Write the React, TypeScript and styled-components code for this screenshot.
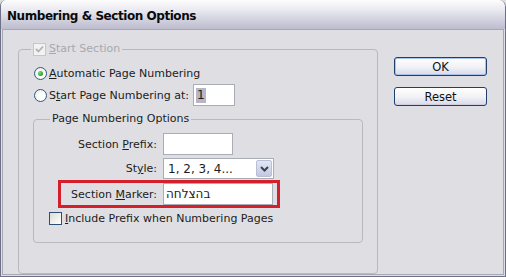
import React from 'react'
import styled, { createGlobalStyle } from 'styled-components'

const GlobalStyle = createGlobalStyle`
  html, body {
    margin: 0;
    padding: 0;
    background: #dfdfe3;
  }
  body {
    font-family: "DejaVu Sans", "Liberation Sans", sans-serif;
    font-size: 11px;
    color: #1c1c1c;
  }
`

const Window = styled.div`
  width: 506px;
  height: 277px;
  box-sizing: border-box;
  display: flex;
  flex-direction: column;
  background: #dfdfe3;
  border: 1px solid #6f6f88;
  border-top: none;
  border-radius: 6px 7px 0 0;
  overflow: hidden;
`

const TitleBar = styled.div`
  height: 29px;
  flex: none;
  display: flex;
  align-items: center;
  padding: 2px 0 0 6px;
  box-sizing: border-box;
  background: linear-gradient(#fdfdfe 0%, #e9e9f0 35%, #c9c9d8 80%, #bdbdcf 100%);
  font-weight: bold;
  font-size: 12px;
  letter-spacing: -0.45px;
  color: #0a0a0a;
`

const Body = styled.div`
  flex: 1;
  display: flex;
  margin: 0 1px 1px 1px;
  padding: 12px 0 0 15px;
  gap: 16px;
  border: 1px solid #a8a8b4;
`

const Group = styled.fieldset`
  margin: 0;
  padding: 0 14px 13px 14px;
  width: 360px;
  box-sizing: border-box;
  border: 1px solid #b9b9bd;
  border-radius: 4px;
`

const InnerGroup = styled.fieldset`
  margin: 6px 0 0 0;
  padding: 0 0 17px 0;
  width: 330px;
  box-sizing: border-box;
  border: 1px solid #b9b9bd;
  border-radius: 4px;
`

const Legend = styled.legend<{ $offset: number }>`
  margin-left: ${({ $offset }) => $offset}px;
  padding: 0 2px;
  line-height: 14px;
  display: flex;
  align-items: center;
  gap: 3px;
`

const Label = styled.span<{ $disabled?: boolean }>`
  color: ${({ $disabled }) => ($disabled ? '#a8a8ad' : '#1c1c1c')};
  white-space: nowrap;
`

const Key = styled.span`
  text-decoration: underline;
  text-underline-offset: 1px;
`

const RadioRow = styled.div<{ $top?: number }>`
  height: 22px;
  display: flex;
  align-items: center;
  margin-top: ${({ $top }) => $top ?? 0}px;
  padding-left: 1px;
  gap: 2px;
`

const Radio = styled.span<{ $checked?: boolean }>`
  width: 13px;
  height: 13px;
  box-sizing: border-box;
  border-radius: 50%;
  border: 1px solid #2c5a88;
  background: radial-gradient(circle at 60% 60%, #ffffff 30%, #e2e2dc 100%);
  display: flex;
  align-items: center;
  justify-content: center;
  flex: none;

  &::after {
    content: '';
    display: ${({ $checked }) => ($checked ? 'block' : 'none')};
    width: 5px;
    height: 5px;
    border-radius: 50%;
    background: radial-gradient(circle at 35% 35%, #7fdc7f 0%, #21a121 70%);
  }
`

const Box = styled.span<{ $disabled?: boolean }>`
  width: 13px;
  height: 13px;
  box-sizing: border-box;
  flex: none;
  border: 1px solid ${({ $disabled }) => ($disabled ? '#c6c6c6' : '#2c4f74')};
  background: ${({ $disabled }) =>
    $disabled ? '#f2f2f2' : 'linear-gradient(135deg, #dcdcd6, #ffffff)'};
  display: flex;
  align-items: center;
  justify-content: center;
`

const Field = styled.div<{ $width: number; $height?: number }>`
  width: ${({ $width }) => $width}px;
  height: ${({ $height }) => $height ?? 22}px;
  box-sizing: border-box;
  flex: none;
  background: #ffffff;
  border: 1px solid #a9adb6;
  display: flex;
  align-items: center;
  padding-left: 2px;
  font-size: 12px;
`

const Selected = styled.span`
  background: #b6b6c6;
  padding: 0 1px;
  line-height: 15px;
`

const FormRow = styled.div<{ $top: number }>`
  display: flex;
  align-items: center;
  margin-top: ${({ $top }) => $top}px;
  gap: 6px;
`

const RowLabel = styled.span<{ $width: number }>`
  width: ${({ $width }) => $width}px;
  text-align: right;
  white-space: nowrap;
`

const MarkerFrame = styled.div`
  margin: 1px 0 0 24px;
  width: 222px;
  height: 28px;
  box-sizing: border-box;
  border: 3px solid #d4202c;
  display: flex;
  align-items: center;
  gap: 6px;
`

const Select = styled.div`
  width: 111px;
  height: 21px;
  box-sizing: border-box;
  background: #ffffff;
  border: 1px solid #a9adb6;
  display: flex;
  align-items: stretch;
  font-size: 12px;
`

const SelectText = styled.span`
  flex: 1;
  display: flex;
  align-items: center;
  padding-left: 4px;
`

const SelectButton = styled.span`
  width: 16px;
  margin: 1px;
  box-sizing: border-box;
  border: 1px solid #b9bfd8;
  border-radius: 2px;
  background: linear-gradient(#e2e6f4, #c3c8e0);
  display: flex;
  align-items: center;
  justify-content: center;
`

const CheckRow = styled.div`
  display: flex;
  align-items: center;
  gap: 3px;
  margin: 4px 0 0 15px;
  height: 13px;
`

const Buttons = styled.div`
  display: flex;
  flex-direction: column;
  gap: 11px;
  padding-top: 15px;
`

const Button = styled.div<{ $default?: boolean }>`
  width: 93px;
  height: 19px;
  box-sizing: border-box;
  border: 1px solid #1f3f6e;
  border-radius: 3px;
  background: linear-gradient(#ffffff 0%, #f2f2f7 50%, #d9d9e8 100%);
  box-shadow: ${({ $default }) =>
    $default ? 'inset 0 0 0 1px #a8c4ee' : 'inset 0 -1px 0 #cfcfe0'};
  display: flex;
  align-items: center;
  justify-content: center;
  font-size: 11.5px;
  color: #111;
`

const Check = ({ color }: { color: string }) => (
  <svg width="9" height="9" viewBox="0 0 9 9">
    <path d="M1 4 L3.5 6.5 L8 1.5" fill="none" stroke={color} strokeWidth="1.8" />
  </svg>
)

const Chevron = () => (
  <svg width="9" height="6" viewBox="0 0 9 6">
    <path d="M1 1 L4.5 4.5 L8 1" fill="none" stroke="#3c4154" strokeWidth="2" />
  </svg>
)

export default function App() {
  return (
    <>
      <GlobalStyle />
      <Window>
        <TitleBar>Numbering &amp; Section Options</TitleBar>
        <Body>
          <Group>
            <Legend $offset={-2}>
              <Box $disabled>
                <Check color="#b2b2b2" />
              </Box>
              <Label $disabled>
                <Key>S</Key>tart Section
              </Label>
            </Legend>

            <RadioRow $top={6}>
              <Radio $checked />
              <Label>
                <Key>A</Key>utomatic Page Numbering
              </Label>
            </RadioRow>
            <RadioRow>
              <Radio />
              <Label>
                S<Key>t</Key>art Page Numbering at:
              </Label>
              <Field $width={42} style={{ marginLeft: 2 }}>
                <Selected>1</Selected>
              </Field>
            </RadioRow>

            <InnerGroup>
              <Legend $offset={16}>
                <Label>Page Numbering Options</Label>
              </Legend>

              <FormRow $top={7}>
                <RowLabel $width={123}>
                  Section <Key>P</Key>refix:
                </RowLabel>
                <Field $width={70} />
              </FormRow>
              <FormRow $top={3}>
                <RowLabel $width={123}>
                  St<Key>y</Key>le:
                </RowLabel>
                <Select>
                  <SelectText>1, 2, 3, 4...</SelectText>
                  <SelectButton>
                    <Chevron />
                  </SelectButton>
                </Select>
              </FormRow>
              <MarkerFrame>
                <RowLabel $width={96}>
                  Section <Key>M</Key>arker:
                </RowLabel>
                <Field $width={110} $height={22}>
                  בהצלחה
                </Field>
              </MarkerFrame>
              <CheckRow>
                <Box />
                <Label>
                  <Key>I</Key>nclude Prefix when Numbering Pages
                </Label>
              </CheckRow>
            </InnerGroup>
          </Group>

          <Buttons>
            <Button $default>OK</Button>
            <Button>Reset</Button>
          </Buttons>
        </Body>
      </Window>
    </>
  )
}
